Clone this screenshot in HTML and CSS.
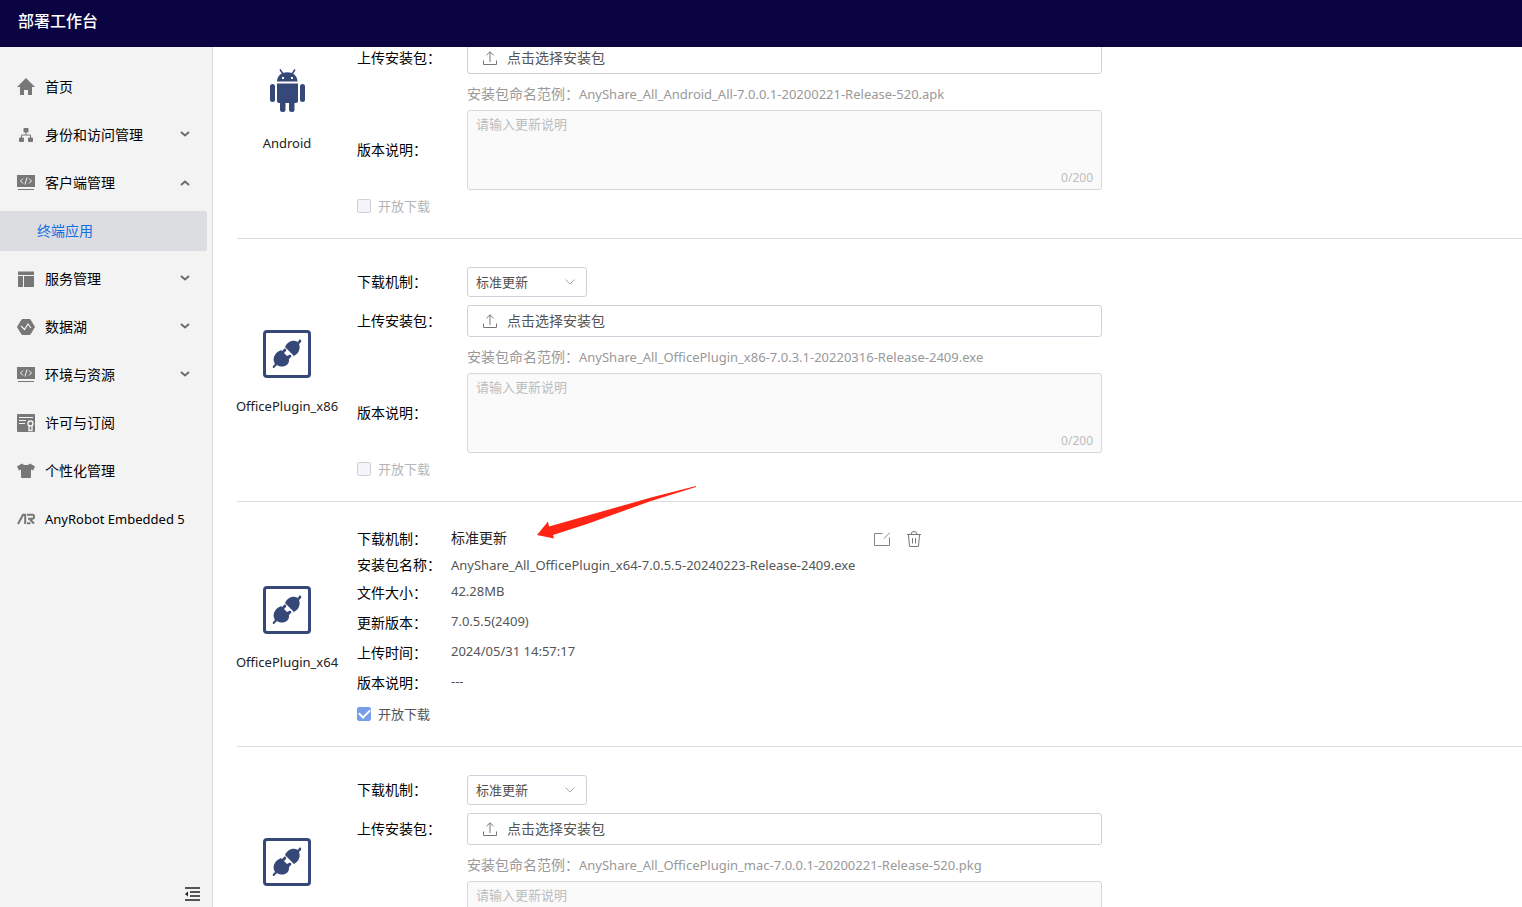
FILE: index.html
```
<!DOCTYPE html>
<html lang="zh-CN">
<head>
<meta charset="utf-8">
<title>部署工作台</title>
<link rel="stylesheet" href="styles.css">
</head>
<body>
<svg class="defs" aria-hidden="true">
  <symbol id="down" viewBox="0 0 10 6"><path d="M1 1l4 3.4L9 1" fill="none" stroke="#6b6b6b" stroke-width="2"/></symbol>
  <symbol id="up" viewBox="0 0 10 6"><path d="M1 5l4-3.4L9 5" fill="none" stroke="#6b6b6b" stroke-width="2"/></symbol>
  <symbol id="thin-down" viewBox="0 0 10 6"><path d="M.5 .5L5 5 9.500 .5" fill="none" stroke="#a3a7b3"/></symbol>
  <symbol id="code" viewBox="0 0 18 18"><path d="M0 1h18v12H0z" fill="#777"/><path d="M1 15.500h16" stroke="#777"/><path d="M6 4.500L3.500 7 6 9.500M12 4.500L14.500 7 12 9.500M10 3.500L8 10.500" fill="none" stroke="#f3f3f3"/></symbol>
  <symbol id="upload" viewBox="0 0 14 14"><path d="M.5 9.500v4h13v-4M7 11V.8M3.500 4.200L7 .8l3.500 3.400" fill="none" stroke="#777"/></symbol>
  <symbol id="plug" viewBox="0 0 48 48"><rect x="1.500" y="1.500" width="45" height="45" rx="2.500" fill="none" stroke="#364878" stroke-width="3"/><g fill="#364878"><path d="M22 17c2-5 8-8 13-5l1-2c1-1 3 0 2 2l-2 2c2 5-1 10-5 12z"/><path d="M17 20l2 1 2-2c1-1 3 0 2 2l-2 2 3 3 2-1c2-1 3 1 2 2l-2 2c1 6-6 10-12 6l-2 2c-1 2-3 1-2-1l2-2c-4-6 1-13 7-14z"/></g></symbol>
</svg>
<header class="topbar"><h1>部署工作台</h1></header>
<div class="shell">
  <aside class="sidebar">
    <nav class="menu">
      <a class="item" href="#"><svg class="ico" viewBox="0 0 18 18"><path d="M9 0l9 9h-3v8h-4v-5H7v5H3V9H0z" fill="#777"/></svg><span>首页</span></a>
      <a class="item" href="#"><svg class="ico" viewBox="0 0 18 18"><g fill="#777"><rect x="6.500" y="2" width="5" height="4.500" rx="1"/><rect x="2" y="11.500" width="5" height="4.500" rx="1"/><rect x="11" y="11.500" width="5" height="4.500" rx="1"/></g><path d="M9 6v3M4.500 12V9h9v3" fill="none" stroke="#777"/></svg><span>身份和访问管理</span><svg class="chev"><use href="#down"/></svg></a>
      <a class="item" href="#"><svg class="ico"><use href="#code"/></svg><span>客户端管理</span><svg class="chev up"><use href="#up"/></svg></a>
      <a class="item active" href="#"><span>终端应用</span></a>
      <a class="item" href="#"><svg class="ico" viewBox="0 0 18 18"><path d="M1 1.500h16v3.500H1zM1 6h5v11H1zM7 6h10v11H7z" fill="#777"/></svg><span>服务管理</span><svg class="chev"><use href="#down"/></svg></a>
      <a class="item" href="#"><svg class="ico" viewBox="0 0 18 18"><path d="M5 1.500h8L17.500 9 13 16.500H5L.5 9z" fill="#777" stroke="#777" stroke-linejoin="round"/><path d="M4 8l3.500 3.500L11 6l3 4" fill="none" stroke="#f3f3f3" stroke-width="1.200"/></svg><span>数据湖</span><svg class="chev"><use href="#down"/></svg></a>
      <a class="item" href="#"><svg class="ico"><use href="#code"/></svg><span>环境与资源</span><svg class="chev"><use href="#down"/></svg></a>
      <a class="item" href="#"><svg class="ico" viewBox="0 0 18 18"><rect width="18" height="18" rx="1" fill="#777"/><path d="M2 3.500h14M2 6.500h7M2 9.500h6" stroke="#f3f3f3"/><circle cx="13.500" cy="9.500" r="2.500" fill="none" stroke="#f3f3f3" stroke-width="1.400"/><path d="M12 12v4.500h3V12" fill="none" stroke="#f3f3f3" stroke-width="1.400"/></svg><span>许可与订阅</span></a>
      <a class="item" href="#"><svg class="ico" viewBox="0 0 18 18"><path d="M5 1.500c2 2 6 2 8 0l5 3-2 4-2-1V15q0 1-1 1H5q-1 0-1-1V7.500l-2 1-2-4z" fill="#777"/></svg><span>个性化管理</span></a>
      <a class="item" href="#"><svg class="ico" viewBox="0 0 18 18"><path d="M1 14L6 4.800h2.200V14M10 4.800h5.500q1.500 0 1.500 2t-1.500 2H11M13 9.500l4 4M10 13.200h3.500" fill="none" stroke="#777" stroke-width="2"/></svg><span class="latin">AnyRobot Embedded 5</span></a>
    </nav>
    <button class="fold" aria-label="收起菜单"><svg viewBox="0 0 15 14"><path d="M0 1h15M5 5h10M5 9h10M0 13h15" stroke="#222" stroke-width="1.300"/><path d="M0 7l3-2.500v5z" fill="#222"/></svg></button>
  </aside>

  <main class="content">
    <div class="scrolled">
      <section class="product">
        <div class="brand"><svg viewBox="0 0 48 48"><g fill="#364878"><path d="M14 14.500C14 2 34.500 2 34.500 14.500z"/><path d="M17 2.500l3 4.500M32 2.500L29 7" stroke="#364878" stroke-width="1.500"/><path d="M14 16.500h21V34q0 2-2 2H16q-2 0-2-2z"/><rect x="7" y="17" width="5" height="18" rx="2.500"/><rect x="37" y="17" width="5" height="18" rx="2.500"/><rect x="17" y="32" width="5.500" height="13" rx="2.500"/><rect x="26" y="32" width="5.500" height="13" rx="2.500"/></g><path d="M19 10h2v2h-2zM28 10h2v2h-2z" fill="#fff"/></svg><span>Android</span></div>
        <form class="form">
          <div class="row"><label for="m1">下载机制：</label><div class="picker"><select id="m1"><option>标准更新</option></select><svg><use href="#thin-down"/></svg></div></div>
          <div class="row"><label for="u1">上传安装包：</label><button type="button" class="upload" id="u1"><svg><use href="#upload"/></svg>点击选择安装包</button></div>
          <p class="hint">安装包命名范例：<span>AnyShare_All_Android_All-7.0.0.1-20200221-Release-520.apk</span></p>
          <div class="row"><label for="t1">版本说明：</label><div class="note"><textarea id="t1" placeholder="请输入更新说明" disabled></textarea><span class="count">0/200</span></div></div>
          <label class="check off"><input type="checkbox" disabled>开放下载</label>
        </form>
      </section>

      <section class="product">
        <div class="brand"><svg><use href="#plug"/></svg><span>OfficePlugin_x86</span></div>
        <form class="form">
          <div class="row"><label for="m2">下载机制：</label><div class="picker"><select id="m2"><option>标准更新</option></select><svg><use href="#thin-down"/></svg></div></div>
          <div class="row"><label for="u2">上传安装包：</label><button type="button" class="upload" id="u2"><svg><use href="#upload"/></svg>点击选择安装包</button></div>
          <p class="hint">安装包命名范例：<span>AnyShare_All_OfficePlugin_x86-7.0.3.1-20220316-Release-2409.exe</span></p>
          <div class="row"><label for="t2">版本说明：</label><div class="note"><textarea id="t2" placeholder="请输入更新说明" disabled></textarea><span class="count">0/200</span></div></div>
          <label class="check off"><input type="checkbox" disabled>开放下载</label>
        </form>
      </section>

      <section class="product uploaded">
        <div class="brand"><svg><use href="#plug"/></svg><span>OfficePlugin_x64</span></div>
        <div class="info">
          <div class="summary">
            <dl>
              <div class="tight"><dt>下载机制：</dt><dd class="mode">标准更新</dd></div>
              <div class="tight"><dt>安装包名称：</dt><dd class="file">AnyShare_All_OfficePlugin_x64-7.0.5.5-20240223-Release-2409.exe</dd></div>
              <div><dt>文件大小：</dt><dd>42.28MB</dd></div>
              <div><dt>更新版本：</dt><dd>7.0.5.5(2409)</dd></div>
              <div><dt>上传时间：</dt><dd>2024/05/31 14:57:17</dd></div>
              <div><dt>版本说明：</dt><dd>---</dd></div>
            </dl>
            <div class="actions">
              <button aria-label="编辑"><svg viewBox="0 0 16 16"><path d="M8.500 2.500H.5v12h15v-8M10 7.500l6-6" fill="none" stroke="#858585"/></svg></button>
              <button aria-label="删除"><svg viewBox="0 0 16 16"><path d="M1 3.500h14M5 3.500q0-3 3-3t3 3M2.500 4l1 11.500h9l1-11.500M6.500 7v5.500M9.500 7v5.500" fill="none" stroke="#777"/></svg></button>
            </div>
          </div>
          <label class="check"><input type="checkbox" checked>开放下载</label>
        </div>
        <svg class="arrow" viewBox="0 0 160 54"><path d="M159 0L116 11 12 40.500 11 35.500 0 49 17 52.500 16 49 50 38 114 15 159 1z" fill="#ff2414"/></svg>
      </section>

      <section class="product">
        <div class="brand"><svg><use href="#plug"/></svg><span>OfficePlugin_mac</span></div>
        <form class="form">
          <div class="row"><label for="m4">下载机制：</label><div class="picker"><select id="m4"><option>标准更新</option></select><svg><use href="#thin-down"/></svg></div></div>
          <div class="row"><label for="u4">上传安装包：</label><button type="button" class="upload" id="u4"><svg><use href="#upload"/></svg>点击选择安装包</button></div>
          <p class="hint">安装包命名范例：<span>AnyShare_All_OfficePlugin_mac-7.0.0.1-20200221-Release-520.pkg</span></p>
          <div class="row"><label for="t4">版本说明：</label><div class="note"><textarea id="t4" placeholder="请输入更新说明" disabled></textarea><span class="count">0/200</span></div></div>
          <label class="check off"><input type="checkbox" disabled>开放下载</label>
        </form>
      </section>
    </div>
  </main>
</div>
</body>
</html>
```
FILE: styles.css
```
* { box-sizing: border-box; }
body {
  margin: 0;
  height: 100vh;
  display: flex;
  flex-direction: column;
  overflow: hidden;
  font: 14px/20px "Noto Sans", "Noto Sans CJK SC", sans-serif;
  color: #000;
  background: #fff;
}
button, select, textarea, input { font: inherit; margin: 0; }
svg { display: block; flex: none; }
.defs { position: absolute; width: 0; height: 0; }

.topbar {
  flex: none;
  height: 47px;
  padding: 9px 18px;
  background: #0a0442;
  color: #fff;
}
.topbar h1 { margin: 0; font-size: 16px; line-height: 24px; font-weight: 500; }

.shell { flex: 1; min-height: 0; display: flex; }
.sidebar {
  width: 213px;
  flex: none;
  display: flex;
  flex-direction: column;
  justify-content: space-between;
  background: #f3f3f3;
  border-right: 1px solid #dcdce0;
}
.menu { display: flex; flex-direction: column; gap: 8px; padding: 20px 5px 0 0; }
.item {
  display: flex;
  align-items: center;
  gap: 10px;
  height: 40px;
  padding: 0 17px;
  border-radius: 0 2px 2px 0;
  color: #000;
  text-decoration: none;
  white-space: nowrap;
}
.item.active { padding-left: 37px; background: #dcdde1; color: #126ee3; }
.latin { font-size: 13px; }
.ico { width: 18px; height: 18px; }
.chev { width: 10px; height: 6px; margin: 0 0 2px auto; }
.chev.up { margin-bottom: 0; }
.fold {
  align-self: flex-end;
  margin: 0 12px 6px 0;
  padding: 0;
  border: 0;
  background: none;
}
.fold svg { width: 15px; height: 14px; }

.content { flex: 1; min-width: 0; overflow: hidden; padding-left: 24px; }
/* Resting scroll offset of the product list */
.scrolled { margin-top: -71px; }
.product {
  position: relative;
  display: flex;
  align-items: center;
  gap: 20px;
  padding: 28px 0 16px;
  border-bottom: 1px solid #dcdcdc;
}
.product.uploaded { padding-top: 24px; }
.brand {
  width: 100px;
  height: 92px;
  flex: none;
  display: flex;
  flex-direction: column;
  align-items: center;
  gap: 18px;
  font-size: 13px;
  color: #222;
  white-space: nowrap;
}
.uploaded .brand { margin-top: 8px; }
.brand svg { width: 48px; height: 48px; }

.form { flex: 1; max-width: 745px; }
.row { display: flex; align-items: center; }
.row + .row { margin-top: 8px; }
.row > label { width: 110px; flex: none; }
.picker { position: relative; width: 120px; }
.picker select {
  display: block;
  width: 100%;
  height: 30px;
  padding: 0 8px;
  appearance: none;
  border: 1px solid #cfd0da;
  border-radius: 3px;
  background: #fff;
  color: #505050;
  font-size: 13px;
}
.picker svg {
  position: absolute;
  right: 12px;
  top: 12px;
  width: 10px;
  height: 6px;
  pointer-events: none;
}
.upload {
  flex: 1;
  height: 32px;
  display: flex;
  align-items: center;
  gap: 10px;
  padding: 0 15px;
  border: 1px solid #cfd0da;
  border-radius: 3px;
  background: #fff;
  color: #555;
}
.upload svg { width: 14px; height: 14px; }
.hint { margin: 0; padding: 10px 0 6px 110px; color: #999; white-space: nowrap; }
.hint span { font-size: 13px; }
.note { position: relative; flex: 1; }
.note textarea {
  display: block;
  width: 100%;
  height: 80px;
  padding: 3px 8px;
  border: 1px solid #d6d7de;
  border-radius: 3px;
  background: #fafafa;
  resize: none;
  font-size: 13px;
}
.note textarea::placeholder { color: #bdbdbd; }
.count { position: absolute; right: 9px; bottom: 2px; font-size: 12px; color: #bdbdbd; }

.check {
  display: flex;
  width: max-content;
  align-items: center;
  gap: 7px;
  height: 32px;
  font-size: 13px;
  color: #555;
}
.check.off { color: #b5b5b5; }
.check input {
  appearance: none;
  width: 14px;
  height: 14px;
  display: grid;
  place-items: center;
  border: 1px solid #cfd0da;
  border-radius: 2px;
  background: #f4f5fa;
}
.check input:checked { border-color: #779eea; background: #779eea; }
.check input:checked::after {
  content: "";
  width: 9px;
  height: 5px;
  margin-bottom: 3px;
  border: solid #fff;
  border-width: 0 0 2px 2px;
  rotate: -45deg;
}

.summary { display: flex; align-items: flex-start; gap: 19px; }
.summary dl { margin: 0; }
.summary dl > div { display: flex; height: 30px; align-items: center; }
.summary dl > .tight { height: 26px; }
.summary dt { width: 94px; }
.summary dd { margin: 0 0 4px; font-size: 13px; color: #555; white-space: nowrap; }
.summary .mode { margin-bottom: 2px; font-size: 14px; color: #222; }
.summary .file { margin-bottom: 0; }
.actions { display: flex; align-items: center; gap: 16px; height: 26px; }
.actions button { padding: 0; border: 0; background: none; }
.actions svg { width: 16px; height: 16px; }

.arrow {
  position: absolute;
  left: 300px;
  top: -16px;
  width: 160px;
  height: 54px;
}
```
